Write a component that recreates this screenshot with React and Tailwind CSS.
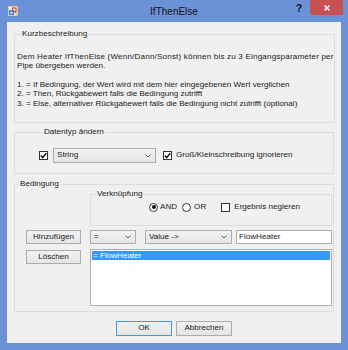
import React from "react";

function Check({ checked = true }) {
  return (
    <span className="w-[9px] h-[9px] border border-[#333] bg-white flex items-center justify-center shrink-0">
      {checked && (
        <svg width="7" height="7" viewBox="0 0 7 7">
          <path d="M0.8 3.6 L2.7 5.6 L6.2 1.2" fill="none" stroke="#111" strokeWidth="1.4" />
        </svg>
      )}
    </span>
  );
}

function Radio({ checked }) {
  return (
    <span className="w-[9px] h-[9px] rounded-full border border-[#333] bg-white flex items-center justify-center shrink-0">
      {checked && <span className="w-[4px] h-[4px] rounded-full bg-[#111]" />}
    </span>
  );
}

function Chevron() {
  return (
    <svg width="6" height="4" viewBox="0 0 6 4" className="shrink-0">
      <path d="M0.5 0.5 L3 3 L5.5 0.5" fill="none" stroke="#555" strokeWidth="0.9" />
    </svg>
  );
}

function Combo({ value, className }) {
  return (
    <div className={"h-[14px] border border-[#acacac] bg-gradient-to-b from-[#f2f2f2] to-[#e5e5e5] flex items-center pl-[3px] pr-[4px] " + className}>
      <span className="flex-1 leading-none">{value}</span>
      <Chevron />
    </div>
  );
}

function Button({ children, className = "" }) {
  return (
    <div className={"border border-[#acacac] bg-gradient-to-b from-[#f2f2f2] to-[#e5e5e5] flex items-center justify-center leading-none " + className}>
      {children}
    </div>
  );
}

function Group({ label, className = "", legendClass = "ml-[4px]", children }) {
  return (
    <fieldset className={"border border-[#dcdcdc] " + className}>
      <legend className={"px-[1px] leading-[10px] h-[10px] " + legendClass}>{label}</legend>
      {children}
    </fieldset>
  );
}

export default function App() {
  return (
    <div className="w-[348px] h-[350px] bg-[#6b91d6] flex flex-col font-['Liberation_Sans',Arial,sans-serif] text-[8.1px] text-[#1a1a1a]">
      <div className="h-[22px] grid grid-cols-[1fr_auto_1fr]">
        <div className="pl-[8px] pt-[6px]">
          <svg width="10" height="10" viewBox="0 0 10 10">
            <rect x="0.5" y="0.5" width="9" height="9" fill="#f6f4e4" stroke="#cfcbb0" />
            <rect x="4.5" y="2" width="3.5" height="3.5" fill="none" stroke="#d9462a" strokeWidth="1.2" />
            <rect x="1.8" y="4.8" width="3.5" height="3.5" fill="none" stroke="#2f5fe0" strokeWidth="1.2" />
            <path d="M7 6 L8.5 8.5" stroke="#6cab3a" strokeWidth="1" />
          </svg>
        </div>
        <div className="text-[10px] leading-none pt-[7px] text-[#111]">IfThenElse</div>
        <div className="flex justify-end items-start pr-[5px]">
          <span className="text-[10px] font-bold leading-none mt-[4px] mr-[8px] text-[#111]">?</span>
          <div className="w-[33px] h-[15px] bg-[#c75050] flex items-center justify-center">
            <svg width="6" height="6" viewBox="0 0 6 6">
              <path d="M0.5 0.5 L5.5 5.5 M5.5 0.5 L0.5 5.5" stroke="#fff" strokeWidth="1.5" />
            </svg>
          </div>
        </div>
      </div>

      <div className="mx-[7px] h-[321px] bg-[#f0f0f0] flex flex-col px-[7px] pt-[7px]">
        <Group label="Kurzbeschreibung" className="h-[94px] pl-[2px] pt-[13px]">
          <div className="leading-[9.33px] whitespace-nowrap">
            <div className="tracking-[0.17px]">Dem Heater IfThenElse (Wenn/Dann/Sonst) können bis zu 3 Eingangsparameter per</div>
            <div>Pipe übergeben werden.</div>
            <div>&nbsp;</div>
            <div>1. = If Bedingung, der Wert wird mit dem hier eingegebenen Wert verglichen</div>
            <div>2. = Then, Rückgabewert falls die Bedingung zutrifft</div>
            <div>3. = Else, alternativer Rückgabewert falls die Bedingung nicht zutrifft (optional)</div>
          </div>
        </Group>

        <Group label="Datentyp ändern" className="h-[47px] mt-[4px] pl-[24px] pt-[11px]">
          <div className="flex items-center h-[15px]">
            <Check />
            <Combo value="String" className="w-[103px] ml-[5px] h-[15px]" />
            <span className="ml-[7px]"><Check /></span>
            <span className="ml-[4px] leading-none">Groß/Kleinschreibung ignorieren</span>
          </div>
        </Group>

        <Group label="Bedingung" className="h-[133px] mt-[5px] pr-[1px]">
          <div className="grid grid-cols-[75px_1fr]">
            <div />
            <Group label="Verknüpfung" legendClass="ml-[5px]" className="h-[37px] pt-[3px]">
              <div className="flex items-center h-[10px] pl-[58px]">
                <Radio checked />
                <span className="ml-[2px] leading-none">AND</span>
                <span className="ml-[5px]"><Radio /></span>
                <span className="ml-[3px] leading-none">OR</span>
                <span className="ml-[15px]"><Check checked={false} /></span>
                <span className="ml-[4px] leading-none">Ergebnis negieren</span>
              </div>
            </Group>

            <div className="flex flex-col gap-[6px] pl-[11px] mt-[4px]">
              <Button className="w-[55px] h-[14px]">Hinzufügen</Button>
              <Button className="w-[55px] h-[14px]">Löschen</Button>
            </div>
            <div className="flex flex-col gap-[5px] mt-[4px]">
              <div className="flex items-center h-[14px]">
                <Combo value="=" className="w-[46px]" />
                <Combo value="Value ->" className="w-[87px] ml-[9px]" />
                <div className="flex-1 ml-[4px] h-[14px] bg-white border border-[#abadb3] flex items-center pl-[2px] leading-none">FlowHeater</div>
              </div>
              <div className="h-[57px] bg-white border border-[#abadb3] p-[1px]">
                <div className="h-[9px] bg-[#3399ff] text-white leading-[9px] pl-[1px]">= FlowHeater</div>
              </div>
            </div>
          </div>
        </Group>

        <div className="flex justify-center gap-[4px] mt-[9px]">
          <Button className="w-[56px] h-[15px] !border-[#3c9be8]">OK</Button>
          <Button className="w-[56px] h-[15px]">Abbrechen</Button>
        </div>
      </div>
    </div>
  );
}
